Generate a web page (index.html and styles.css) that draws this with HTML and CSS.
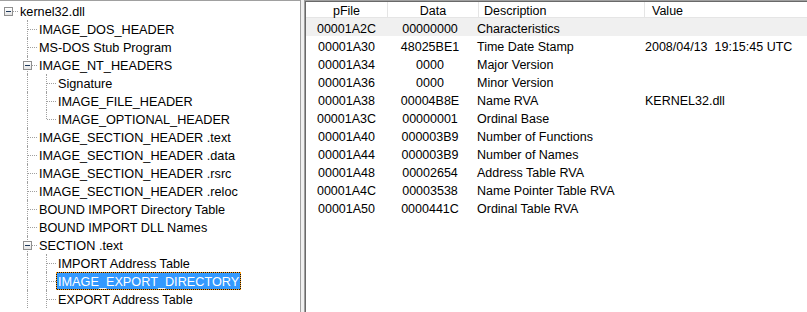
FILE: index.html
```html
<!DOCTYPE html>
<html lang="en">
<head>
    <meta charset="UTF-8">
    <title>kernel32.dll</title>
    <link rel="stylesheet" href="styles.css">
</head>
<body>
    <div class="app">
        <div class="tree">
            <div class="node"><span class="cell box root"></span><span class="label">kernel32.dll</span></div>
            <div class="node"><span class="cell"></span><span class="cell tee"></span><span class="label">IMAGE_DOS_HEADER</span></div>
            <div class="node"><span class="cell"></span><span class="cell tee"></span><span class="label">MS-DOS Stub Program</span></div>
            <div class="node"><span class="cell"></span><span class="cell box tee"></span><span class="label">IMAGE_NT_HEADERS</span></div>
            <div class="node"><span class="cell"></span><span class="cell pipe"></span><span class="cell tee"></span><span class="label">Signature</span></div>
            <div class="node"><span class="cell"></span><span class="cell pipe"></span><span class="cell tee"></span><span class="label">IMAGE_FILE_HEADER</span></div>
            <div class="node"><span class="cell"></span><span class="cell pipe"></span><span class="cell elbow"></span><span class="label">IMAGE_OPTIONAL_HEADER</span></div>
            <div class="node"><span class="cell"></span><span class="cell tee"></span><span class="label">IMAGE_SECTION_HEADER .text</span></div>
            <div class="node"><span class="cell"></span><span class="cell tee"></span><span class="label">IMAGE_SECTION_HEADER .data</span></div>
            <div class="node"><span class="cell"></span><span class="cell tee"></span><span class="label">IMAGE_SECTION_HEADER .rsrc</span></div>
            <div class="node"><span class="cell"></span><span class="cell tee"></span><span class="label">IMAGE_SECTION_HEADER .reloc</span></div>
            <div class="node"><span class="cell"></span><span class="cell tee"></span><span class="label">BOUND IMPORT Directory Table</span></div>
            <div class="node"><span class="cell"></span><span class="cell tee"></span><span class="label">BOUND IMPORT DLL Names</span></div>
            <div class="node"><span class="cell"></span><span class="cell box tee"></span><span class="label">SECTION .text</span></div>
            <div class="node"><span class="cell"></span><span class="cell pipe"></span><span class="cell tee"></span><span class="label">IMPORT Address Table</span></div>
            <div class="node"><span class="cell"></span><span class="cell pipe"></span><span class="cell tee"></span><span class="label selected">IMAGE_EXPORT_DIRECTORY</span></div>
            <div class="node"><span class="cell"></span><span class="cell pipe"></span><span class="cell tee"></span><span class="label">EXPORT Address Table</span></div>
        </div>
        <div class="splitter"></div>
        <div class="list">
            <div class="list-head">
                <span class="col-c">pFile</span>
                <span class="col-c">Data</span>
                <span>Description</span>
                <span>Value</span>
            </div>
            <div class="row hot"><span class="col-c">00001A2C</span><span class="col-c">00000000</span><span>Characteristics</span><span></span></div>
            <div class="row"><span class="col-c">00001A30</span><span class="col-c">48025BE1</span><span>Time Date Stamp</span><span>2008/04/13&nbsp;&nbsp;19:15:45 UTC</span></div>
            <div class="row"><span class="col-c">00001A34</span><span class="col-c">0000</span><span>Major Version</span><span></span></div>
            <div class="row"><span class="col-c">00001A36</span><span class="col-c">0000</span><span>Minor Version</span><span></span></div>
            <div class="row"><span class="col-c">00001A38</span><span class="col-c">00004B8E</span><span>Name RVA</span><span>KERNEL32.dll</span></div>
            <div class="row"><span class="col-c">00001A3C</span><span class="col-c">00000001</span><span>Ordinal Base</span><span></span></div>
            <div class="row"><span class="col-c">00001A40</span><span class="col-c">000003B9</span><span>Number of Functions</span><span></span></div>
            <div class="row"><span class="col-c">00001A44</span><span class="col-c">000003B9</span><span>Number of Names</span><span></span></div>
            <div class="row"><span class="col-c">00001A48</span><span class="col-c">00002654</span><span>Address Table RVA</span><span></span></div>
            <div class="row"><span class="col-c">00001A4C</span><span class="col-c">00003538</span><span>Name Pointer Table RVA</span><span></span></div>
            <div class="row"><span class="col-c">00001A50</span><span class="col-c">0000441C</span><span>Ordinal Table RVA</span><span></span></div>
        </div>
    </div>
</body>
</html>
```
FILE: styles.css
```css
body {
    margin: 0;
    background-color: #f0f0f0;
    font-family: "Liberation Sans", Arial, sans-serif;
    color: #000;
}
.app {
    display: flex;
    height: 312px;
    overflow: hidden;
}

/* tree pane */
.tree {
    width: 300px;
    flex: none;
    background: #fff;
    border-top: 1px solid #a0a0a0;
    border-right: 1px solid #a0a0a0;
    padding-top: 1px;
    font-size: 12.7px;
}
.node {
    display: flex;
    height: 18px;
    white-space: nowrap;
}
.cell {
    position: relative;
    width: 19px;
    flex: none;
}
.pipe::before, .tee::before, .elbow::before {
    content: "";
    position: absolute;
    left: 8px;
    top: 0;
    bottom: 0;
    border-left: 1px dotted #a0a0a0;
}
.elbow::before {
    bottom: 50%;
}
.tee::after, .elbow::after, .root::after {
    content: "";
    position: absolute;
    left: 9px;
    right: 1px;
    top: 9px;
    border-top: 1px dotted #a0a0a0;
}

/* expand box: minus, face, frame */
.box {
    background-image:
        linear-gradient(#1e395b, #1e395b),
        linear-gradient(180deg, #fff, #e4e4e4),
        linear-gradient(#8f8f8f, #8f8f8f);
    background-repeat: no-repeat;
    background-size: 5px 1px, 7px 7px, 9px 9px;
    background-position: 6px 9px, 5px 6px, 4px 5px;
}
.box::after {
    left: 13px;
}
.box::before {
    -webkit-mask: linear-gradient(#000, #000) top / 100% 5px no-repeat,
                  linear-gradient(#000, #000) bottom / 100% 4px no-repeat;
    mask: linear-gradient(#000, #000) top / 100% 5px no-repeat,
          linear-gradient(#000, #000) bottom / 100% 4px no-repeat;
}
.label {
    margin-left: -1px;
    padding: 0 1px;
    border: 1px solid transparent;
    line-height: 18px;
}
.selected {
    color: #fff;
    border: 1px dotted #ffa21a;
    background: linear-gradient(#3399ff, #3399ff) padding-box, #111 border-box;
}

.splitter {
    width: 3px;
    flex: none;
}

/* list pane */
.list {
    flex: 1;
    background: #fff;
    border-top: 1px solid #a0a0a0;
    border-left: 1px solid #a0a0a0;
    box-shadow: inset 1px 1px 0 #696969;
    padding: 1px 0 0 1px;
    font-size: 12.5px;
}
.list-head {
    display: grid;
    grid-template-columns: 82px 91px 166px 1fr;
    height: 15px;
    border-bottom: 1px solid #e5e5e5;
    line-height: 19px;
}
.list-head span {
    height: 15px;
    border-right: 1px solid #e5e5e5;
    padding-left: 5px;
}
.list-head span:last-child {
    border-right: none;
    padding-left: 7px;
}
.list-head .col-c {
    padding-left: 0;
    text-align: center;
}
.row {
    display: grid;
    grid-template-columns: 81px 86px 168px 1fr;
    height: 18px;
    line-height: 23px;
    white-space: nowrap;
}
.row span {
    height: 18px;
    padding-left: 4px;
}
.row .col-c {
    padding-left: 0;
    text-align: center;
}
.hot {
    background: #f0f0f0;
}
```
